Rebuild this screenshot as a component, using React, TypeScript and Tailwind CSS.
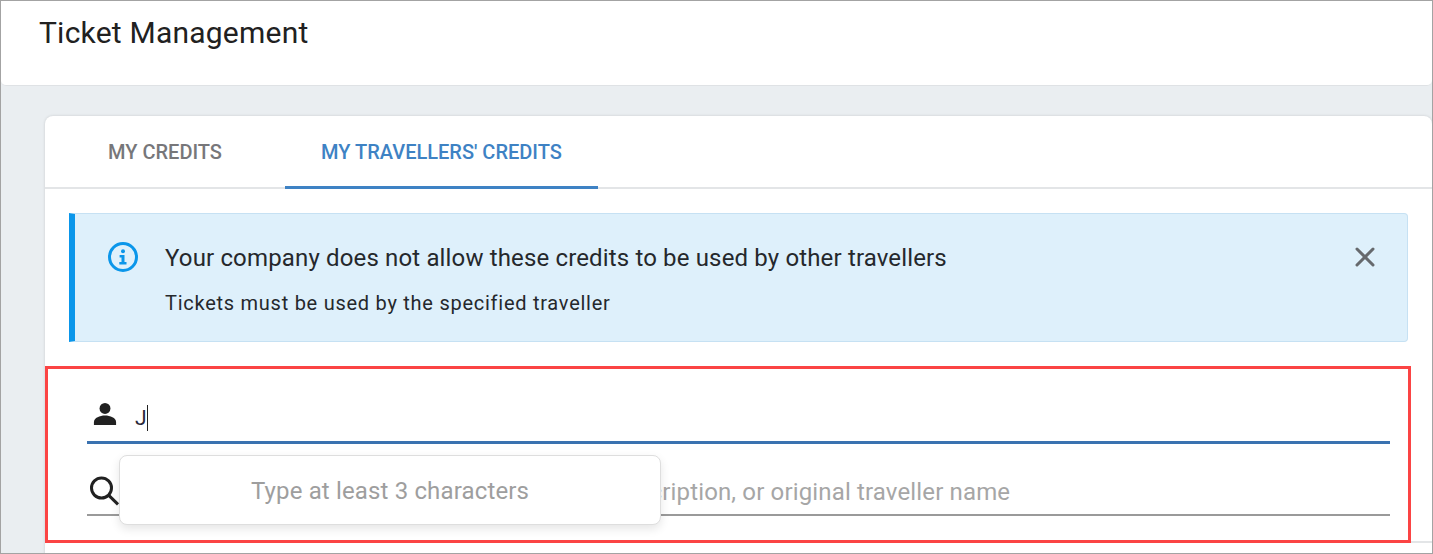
import React from 'react';
import { X } from 'lucide-react';

const roboto = "font-['Roboto',sans-serif]";

const InfoIcon = () => (
  <svg width="32" height="32" viewBox="0 0 32 32" fill="none">
    <circle cx="16" cy="16" r="13.5" stroke="#0a96ea" strokeWidth="3" />
    <circle cx="16" cy="10.2" r="2" fill="#0a96ea" />
    <path d="M12.6 14h4.9v7h2v2.4h-7.2V21h2.2v-4.6h-1.9z" fill="#0a96ea" />
  </svg>
);

const PersonIcon = () => (
  <svg width="24" height="24" viewBox="0 0 26 26" fill="#212121">
    <circle cx="13" cy="7" r="5.9" />
    <path d="M1 25v-3.2C1 17 7.5 14.6 13 14.6s12 2.4 12 7.2V25z" />
  </svg>
);

const SearchIcon = () => (
  <svg width="32" height="32" viewBox="0 0 32 32" fill="none" stroke="#212121" strokeWidth="3">
    <circle cx="13.5" cy="13" r="10" />
    <path d="M20.8 20.4 30 29.4" />
  </svg>
);

export default function App() {
  return (
    <div className={`relative h-[554px] w-[1433px] overflow-hidden border border-[#a3a3a3] bg-[#eaeef1] ${roboto}`}>
      <header className="h-[85px] rounded-b-[5px] border-b border-[#dfe2e5] bg-white pl-[38px] pt-[13px]">
        <h1 className="text-[30px] leading-[38px] font-normal tracking-[0.22px] text-[#212121]">Ticket Management</h1>
      </header>

      <main className="ml-[44px] mt-[30px] h-[500px] rounded-t-[8px] bg-white shadow-[0_0_3px_rgba(0,0,0,0.15)]">
        <nav className="flex h-[73px] border-b-2 border-[#e3e5e7]">
          <button className="flex h-[73px] w-[240px] items-center justify-center pb-[2px] text-[20px] font-medium text-[#77777a]">
            MY CREDITS
          </button>
          <button className="flex h-[73px] w-[313px] items-center justify-center border-b-[3px] border-[#3e82c4] pt-[1px] text-[20px] font-medium text-[#3e82c4]">
            MY TRAVELLERS' CREDITS
          </button>
        </nav>

        <div className="ml-[24px] mr-[24px] mt-[24px] flex h-[129px] items-start rounded-r-[4px] border border-l-[6px] border-[#c6e1f3] border-l-[#0a96ea] bg-[#def0fb] pl-[32px] pr-[26px] pt-[27px]">
          <InfoIcon />
          <div className="ml-[26px] mt-[1px] flex-1 text-[#25282c]">
            <p className="text-[24px] leading-[32px] tracking-[0.15px]">Your company does not allow these credits to be used by other travellers</p>
            <p className="mt-[16px] text-[20px] leading-[26px] tracking-[0.74px]">Tickets must be used by the specified traveller</p>
          </div>
          <X size={32} strokeWidth={2.25} className="text-[#66696d]" />
        </div>

        <section className="relative ml-[42px] mr-[42px] mt-[38px]">
          <div className="flex h-[64px] items-start border-b-[3px] border-[#3a72b0]">
            <div className="ml-[6px] mt-[22px]"><PersonIcon /></div>
            <span className="ml-[18px] mt-[25px] flex h-[26px] items-center border-r border-[#212121] text-[21px] leading-[26px] text-[#2a2a3a]">J</span>
          </div>
          <div className="mt-[27px] flex h-[45px] items-start border-b-2 border-[#9a9a9a]">
            <div className="ml-[1px] mt-[4px]"><SearchIcon /></div>
            <span className="ml-[12px] mt-[5px] whitespace-nowrap text-[24px] leading-[32px] tracking-[0.15px] text-[#a6a6a6]">Search by ticket number, confirmation code, description, or original traveller name</span>
          </div>

          {/* hint popover over the second field */}
          <div className="absolute left-[32px] top-[75px] flex h-[70px] w-[542px] items-center justify-center rounded-[8px] border border-[#dedede] bg-white pt-[2px] text-[24px] tracking-[0.15px] text-[#9e9e9e] shadow-[0_4px_10px_rgba(0,0,0,0.1)]">
            Type at least 3 characters
          </div>
        </section>

        <div className="mt-[25px] border-t-2 border-[#e3e5e7]" />
      </main>

      {/* red annotation frame from the screenshot */}
      <div className="absolute left-[44px] top-[365px] h-[177px] w-[1366px] border-[3px] border-[#fb4444]" />
    </div>
  );
}
